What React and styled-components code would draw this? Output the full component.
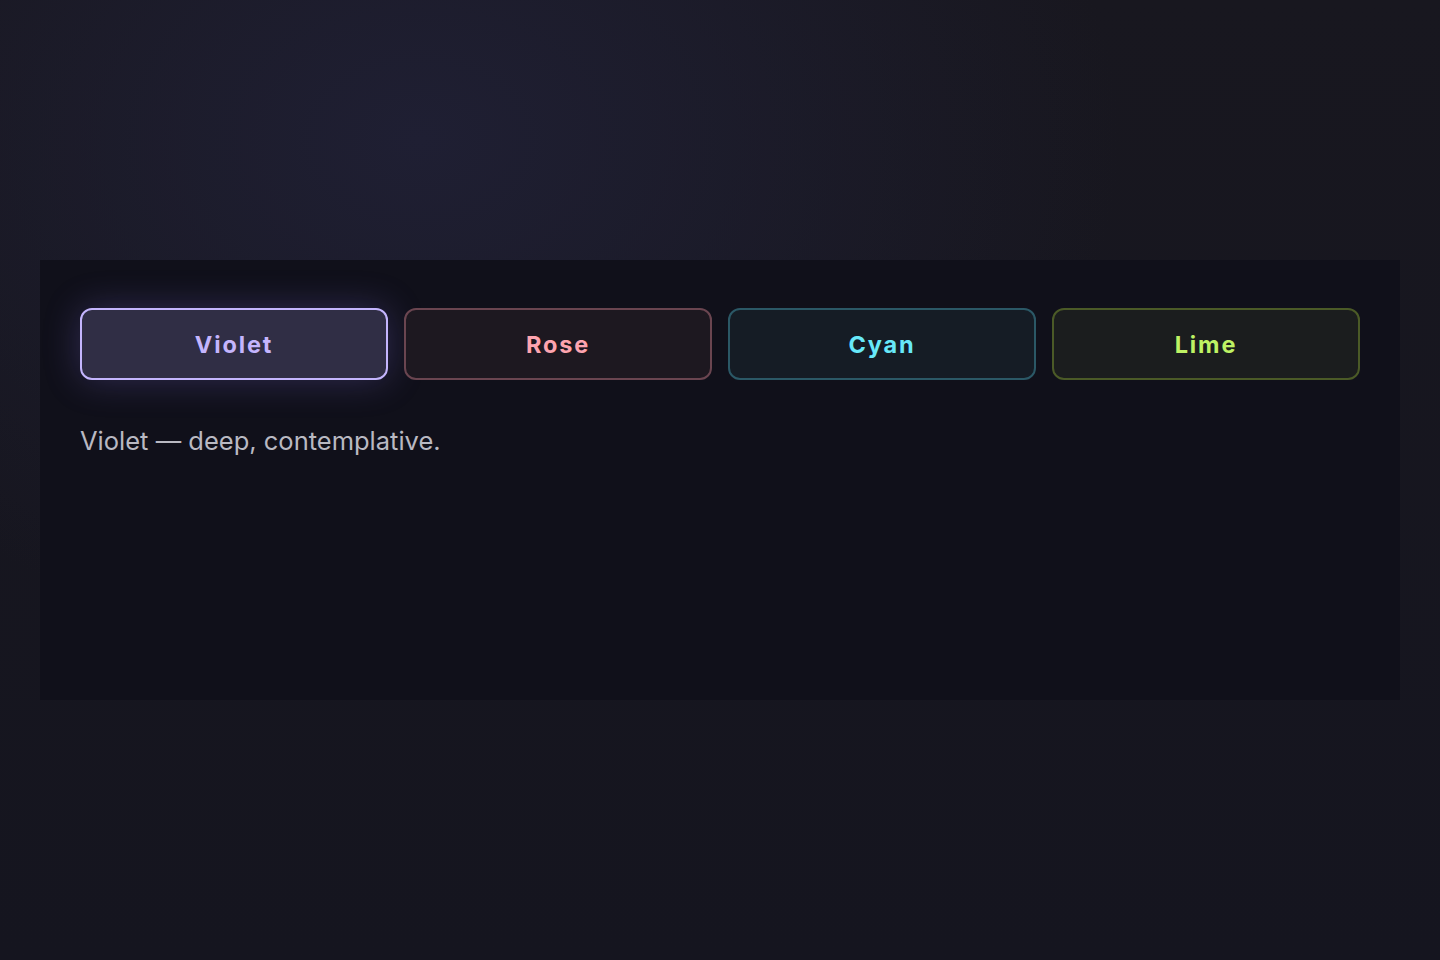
import { useState } from 'react';
import styled, { createGlobalStyle } from 'styled-components';

const GlobalStyle = createGlobalStyle`
  html, body {
    margin: 0;
    padding: 0;
  }
  body {
    min-height: 100vh;
    font-family: Inter, "Noto Sans", sans-serif;
    background: #15151e;
  }
`;

const Page = styled.div`
  min-height: 960px;
  box-sizing: border-box;
  padding: 260px 40px 0;
  background:
    radial-gradient(ellipse 700px 520px at 420px 140px, #1f1f33 0%, rgba(31, 31, 51, 0) 100%),
    linear-gradient(180deg, #18171f 0%, #15151f 100%);
`;

const Panel = styled.section`
  height: 440px;
  box-sizing: border-box;
  padding: 48px 40px;
  background: #10101a;
`;

const Tabs = styled.div`
  display: grid;
  grid-template-columns: repeat(4, 1fr);
  gap: 16px;
`;

const Tab = styled.button`
  height: 72px;
  border-radius: 12px;
  border: 2px solid ${(p) => (p.$active ? p.$tone.text : p.$tone.border)};
  background: ${(p) => (p.$active ? p.$tone.activeBg : p.$tone.bg)};
  color: ${(p) => p.$tone.text};
  font-family: Inter, "Noto Sans", sans-serif;
  font-size: 23.5px;
  font-weight: 700;
  letter-spacing: 0.08em;
  cursor: pointer;
  box-shadow: ${(p) => (p.$active ? `0 0 36px ${p.$tone.glow}` : 'none')};
  transition: all 0.2s;
`;

const Caption = styled.p`
  margin: 46px 0 0;
  font-size: 25.5px;
  line-height: 30px;
  color: #b9b9c2;
`;

const tones = [
  {
    name: 'Violet',
    desc: 'deep, contemplative.',
    text: '#c4b5fd',
    border: '#5b4f86',
    bg: '#1d1b2b',
    activeBg: '#302e45',
    glow: 'rgba(139, 118, 240, 0.26)',
  },
  {
    name: 'Rose',
    desc: 'warm, tender.',
    text: '#fda4af',
    border: '#6a4550',
    bg: '#1d1820',
    activeBg: '#33242c',
    glow: 'rgba(253, 164, 175, 0.26)',
  },
  {
    name: 'Cyan',
    desc: 'cool, clear.',
    text: '#67e8f9',
    border: '#2b5866',
    bg: '#151c25',
    activeBg: '#1c3440',
    glow: 'rgba(103, 232, 249, 0.26)',
  },
  {
    name: 'Lime',
    desc: 'bright, electric.',
    text: '#bef264',
    border: '#4b5a27',
    bg: '#1b1d1e',
    activeBg: '#2b3322',
    glow: 'rgba(190, 242, 100, 0.26)',
  },
];

export default function App() {
  const [active, setActive] = useState(0);
  const cur = tones[active];
  return (
    <>
      <GlobalStyle />
      <Page>
        <Panel>
          <Tabs>
            {tones.map((t, i) => (
              <Tab key={t.name} $tone={t} $active={i === active} onClick={() => setActive(i)}>
                {t.name}
              </Tab>
            ))}
          </Tabs>
          <Caption>
            {cur.name} — {cur.desc}
          </Caption>
        </Panel>
      </Page>
    </>
  );
}
